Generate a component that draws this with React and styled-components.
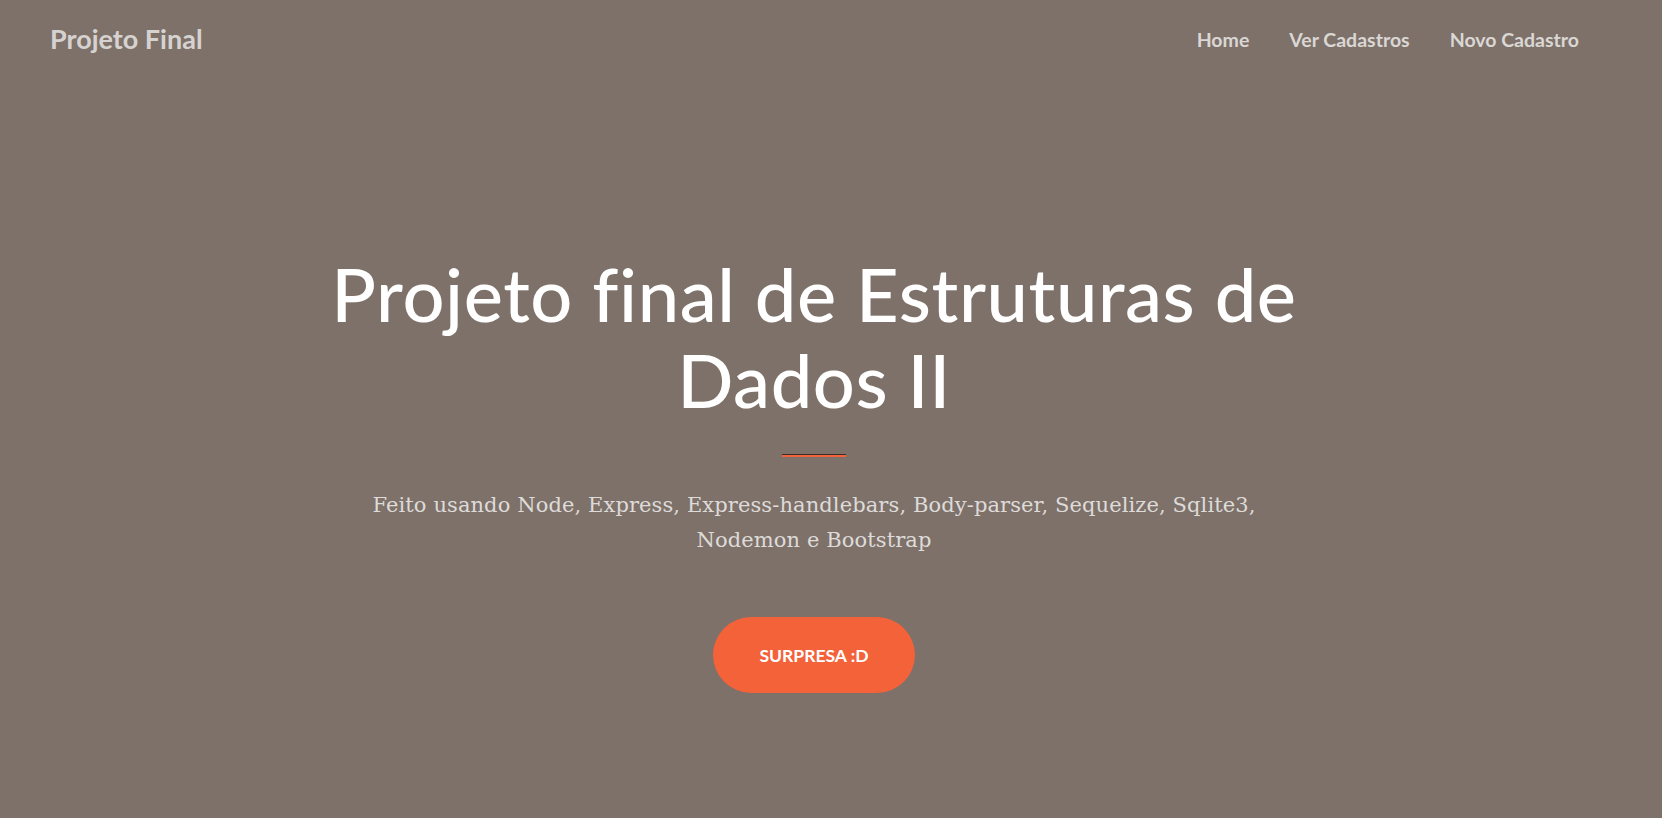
import styled, { createGlobalStyle } from 'styled-components'

const GlobalStyle = createGlobalStyle`
  html, body {
    margin: 0;
    padding: 0;
  }
  body {
    background-color: #7d7169;
    font-family: "DejaVu Serif", serif;
  }
  * {
    box-sizing: border-box;
  }
`

const Page = styled.div`
  display: flex;
  flex-direction: column;
  min-height: 100vh;
  background-color: #7d7169;
`

const Navbar = styled.nav`
  display: flex;
  align-items: center;
  justify-content: space-between;
  height: 76px;
  padding: 0 63px 0 50px;
`

const Brand = styled.a`
  font-family: Lato, "Open Sans", sans-serif;
  font-size: 27px;
  font-weight: 700;
  color: rgba(255, 255, 255, 0.7);
  text-decoration: none;
  cursor: pointer;
`

const NavList = styled.div`
  display: flex;
  align-items: center;
  padding-top: 2px;
`

const NavLink = styled.a`
  padding: 0 20px;
  font-family: Lato, "Open Sans", sans-serif;
  font-size: 19.5px;
  font-weight: 700;
  color: rgba(255, 255, 255, 0.72);
  text-decoration: none;
  cursor: pointer;
`

const Hero = styled.header`
  display: flex;
  flex-direction: column;
  align-items: center;
  text-align: center;
  padding: 175px 34px 0 0;
`

const Title = styled.h1`
  max-width: 1000px;
  margin: 0;
  font-family: Lato, "Open Sans", sans-serif;
  font-size: 74px;
  font-weight: 500;
  line-height: 86px;
  letter-spacing: 0.6px;
  color: #fff;
`

const Divider = styled.hr`
  width: 64px;
  height: 3px;
  margin: 31px auto 31px;
  border: 0;
  border-top: 1px solid #3a2f2a;
  background-color: #f4623a;
`

const Lead = styled.p`
  max-width: 950px;
  margin: 0;
  font-family: "DejaVu Serif", serif;
  font-size: 21px;
  line-height: 35px;
  letter-spacing: 0.1px;
  color: rgba(255, 255, 255, 0.75);
`

const Button = styled.a`
  display: flex;
  align-items: center;
  justify-content: center;
  width: 202px;
  height: 76px;
  margin-top: 59px;
  border-radius: 40px;
  background-color: #f4623a;
  font-family: Lato, "Open Sans", sans-serif;
  font-size: 17.5px;
  font-weight: 700;
  text-transform: uppercase;
  color: #fff;
  text-decoration: none;
  cursor: pointer;
`

export default function App() {
  return (
    <Page>
      <GlobalStyle />
      <Navbar>
        <Brand href="#">Projeto Final</Brand>
        <NavList>
          <NavLink href="#">Home</NavLink>
          <NavLink href="#">Ver Cadastros</NavLink>
          <NavLink href="#">Novo Cadastro</NavLink>
        </NavList>
      </Navbar>
      <Hero>
        <Title>Projeto final de Estruturas de Dados II</Title>
        <Divider />
        <Lead>
          Feito usando Node, Express, Express-handlebars, Body-parser, Sequelize, Sqlite3, Nodemon e Bootstrap
        </Lead>
        <Button href="#">Surpresa :D</Button>
      </Hero>
    </Page>
  )
}
